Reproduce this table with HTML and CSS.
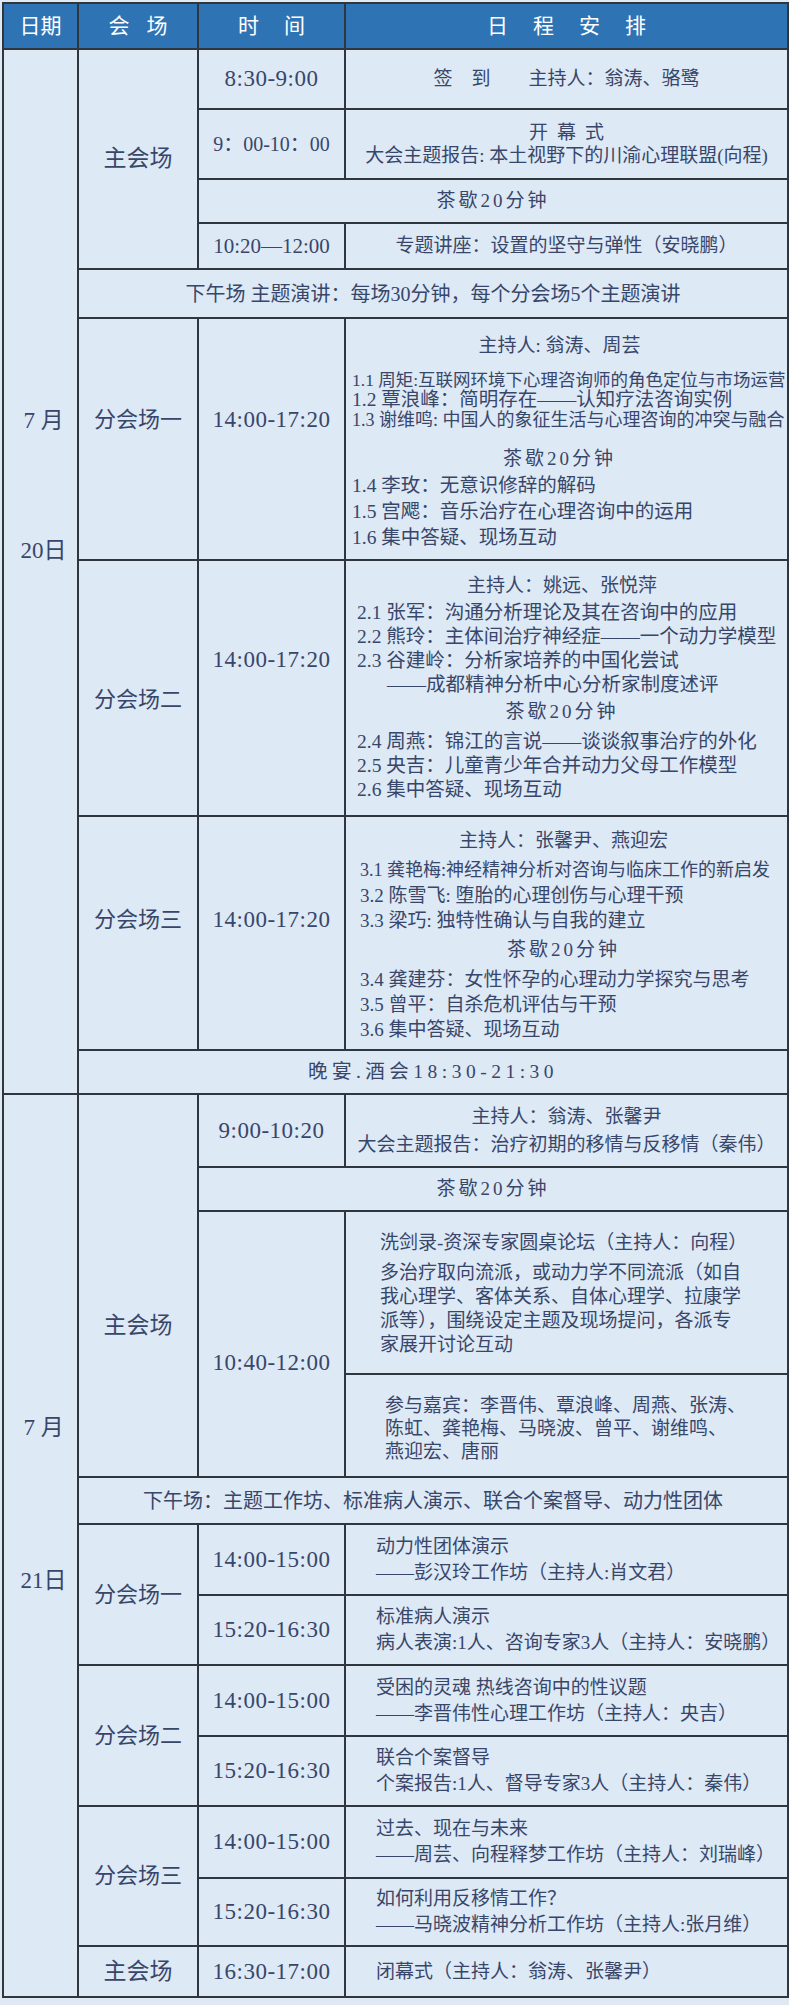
FILE: index.html
```html
<!DOCTYPE html>
<html lang="zh-CN">
<head>
<meta charset="utf-8">
<title>日程安排</title>
<link rel="stylesheet" href="styles.css">
</head>
<body>
<div class="page">
<table class="sched">
<colgroup>
<col class="c-date"><col class="c-venue"><col class="c-time"><col class="c-prog">
</colgroup>
<thead>
<tr class="h46">
<th>日期</th>
<th><span class="ls17">会场</span></th>
<th><span class="ls25">时间</span></th>
<th><span class="ls25">日程安排</span></th>
</tr>
</thead>
<tbody>
<!-- 7月20日 -->
<tr class="h60">
<td class="date day1" rowspan="9"><span class="dl gap1">7 月</span><span class="dl">20日</span></td>
<td class="venue big" rowspan="4">主会场</td>
<td class="time">8:30-9:00</td>
<td class="prog c">签　到　　主持人：翁涛、骆鹭</td>
</tr>
<tr class="h70">
<td class="time t-open">9：00-10：00</td>
<td class="prog c lh23"><span class="ls9">开幕式</span><br>大会主题报告: 本土视野下的川渝心理联盟(向程)</td>
</tr>
<tr class="h44"><td class="prog c tea" colspan="2">茶歇20分钟</td></tr>
<tr class="h46">
<td class="time t-dash">10:20—12:00</td>
<td class="prog c">专题讲座：设置的坚守与弹性（安晓鹏）</td>
</tr>
<tr class="h49"><td class="prog c band" colspan="3">下午场 主题演讲：每场30分钟，每个分会场5个主题演讲</td></tr>

<tr class="h242">
<td class="venue up38">分会场一</td>
<td class="time up38">14:00-17:20</td>
<td class="prog list l1">
<div class="host">主持人: 翁涛、周芸</div>
<div class="group tight">
<div class="it s175">1.1 周矩:互联网环境下心理咨询师的角色定位与市场运营</div>
<div class="it">1.2 覃浪峰：简明存在——认知疗法咨询实例</div>
<div class="it s18">1.3 谢维鸣: 中国人的象征生活与心理咨询的冲突与融合</div>
</div>
<div class="tea-ln">茶歇20分钟</div>
<div class="group lh26">
<div class="it">1.4 李玫：无意识修辞的解码</div>
<div class="it">1.5 宫飔：音乐治疗在心理咨询中的运用</div>
<div class="it">1.6 集中答疑、现场互动</div>
</div>
</td>
</tr>

<tr class="h256">
<td class="venue down24">分会场二</td>
<td class="time up28">14:00-17:20</td>
<td class="prog list l2">
<div class="host">主持人：姚远、张悦萍</div>
<div class="group lh24">
<div class="it">2.1 张军：沟通分析理论及其在咨询中的应用</div>
<div class="it">2.2 熊玲：主体间治疗神经症——一个动力学模型</div>
<div class="it">2.3 谷建岭：分析家培养的中国化尝试</div>
<div class="it sub">——成都精神分析中心分析家制度述评</div>
</div>
<div class="tea-ln">茶歇20分钟</div>
<div class="group lh24">
<div class="it">2.4 周燕：锦江的言说——谈谈叙事治疗的外化</div>
<div class="it">2.5 央吉：儿童青少年合并动力父母工作模型</div>
<div class="it">2.6 集中答疑、现场互动</div>
</div>
</td>
</tr>

<tr class="h234">
<td class="venue up26">分会场三</td>
<td class="time up26">14:00-17:20</td>
<td class="prog list l3">
<div class="host">主持人：张馨尹、燕迎宏</div>
<div class="group lh25">
<div class="it s18">3.1 龚艳梅:神经精神分析对咨询与临床工作的新启发</div>
<div class="it">3.2 陈雪飞: 堕胎的心理创伤与心理干预</div>
<div class="it">3.3 梁巧: 独特性确认与自我的建立</div>
</div>
<div class="tea-ln">茶歇20分钟</div>
<div class="group lh25">
<div class="it">3.4 龚建芬：女性怀孕的心理动力学探究与思考</div>
<div class="it">3.5 曾平：自杀危机评估与干预</div>
<div class="it">3.6 集中答疑、现场互动</div>
</div>
</td>
</tr>

<tr class="h44"><td class="prog c party" colspan="3">晚宴.酒会18:30-21:30</td></tr>

<!-- 7月21日 -->
<tr class="h73">
<td class="date day2" rowspan="12"><span class="dl gap2">7 月</span><span class="dl">21日</span></td>
<td class="venue big down80" rowspan="4">主会场</td>
<td class="time">9:00-10:20</td>
<td class="prog c lh28">主持人：翁涛、张馨尹<br>大会主题报告：治疗初期的移情与反移情（秦伟）</td>
</tr>
<tr class="h44"><td class="prog c tea" colspan="2">茶歇20分钟</td></tr>
<tr class="h163">
<td class="time down38" rowspan="2">10:40-12:00</td>
<td class="prog forum">
<div class="forum-title">洗剑录-资深专家圆桌论坛（主持人：向程）</div>
<p class="forum-text">多治疗取向流派，或动力学不同流派（如自<br>我心理学、客体关系、自体心理学、拉康学<br>派等），围绕设定主题及现场提问，各派专<br>家展开讨论互动</p>
</td>
</tr>
<tr class="h103">
<td class="prog guests">参与嘉宾：李晋伟、覃浪峰、周燕、张涛、<br>陈虹、龚艳梅、马晓波、曾平、谢维鸣、<br>燕迎宏、唐丽</td>
</tr>
<tr class="h47"><td class="prog c band" colspan="3">下午场：主题工作坊、标准病人演示、联合个案督导、动力性团体</td></tr>

<tr class="h71">
<td class="venue" rowspan="2">分会场一</td>
<td class="time">14:00-15:00</td>
<td class="prog ws">动力性团体演示<br>——彭汉玲工作坊（主持人:肖文君）</td>
</tr>
<tr class="h70">
<td class="time">15:20-16:30</td>
<td class="prog ws">标准病人演示<br>病人表演:1人、咨询专家3人（主持人：安晓鹏）</td>
</tr>
<tr class="h71">
<td class="venue" rowspan="2">分会场二</td>
<td class="time">14:00-15:00</td>
<td class="prog ws">受困的灵魂 热线咨询中的性议题<br>——李晋伟性心理工作坊（主持人：央吉）</td>
</tr>
<tr class="h70">
<td class="time">15:20-16:30</td>
<td class="prog ws">联合个案督导<br>个案报告:1人、督导专家3人（主持人：秦伟）</td>
</tr>
<tr class="h72">
<td class="venue" rowspan="2">分会场三</td>
<td class="time">14:00-15:00</td>
<td class="prog ws">过去、现在与未来<br>——周芸、向程释梦工作坊（主持人：刘瑞峰）</td>
</tr>
<tr class="h68">
<td class="time">15:20-16:30</td>
<td class="prog ws">如何利用反移情工作？<br>——马晓波精神分析工作坊（主持人:张月维）</td>
</tr>
<tr class="h51">
<td class="venue big">主会场</td>
<td class="time">16:30-17:00</td>
<td class="prog ws">闭幕式（主持人：翁涛、张馨尹）</td>
</tr>
</tbody>
</table>
</div>
</body>
</html>
```

FILE: styles.css
```css
* { box-sizing: border-box; }

html, body {
  margin: 0;
  padding: 0;
}

body {
  width: 789px;
  height: 2005px;
  overflow: hidden;
  background: #dfe9f4;
  color: #38466a;
  font-family: "Liberation Serif", "Noto Sans CJK SC", serif;
}

.page {
  padding: 2px 2px 0 2px;
}

.sched {
  border-collapse: collapse;
  table-layout: fixed;
  width: 785px;
  background: #dde9f5;
}

.c-date { width: 75px; }
.c-venue { width: 120px; }
.c-time { width: 147px; }
.c-prog { width: 443px; }

.sched th,
.sched td {
  border: 2px solid #30363d;
  padding: 0;
  text-align: center;
  vertical-align: middle;
}

/* row heights */
.h44 { height: 44px; }
.h46 { height: 46px; }
.h47 { height: 47px; }
.h49 { height: 49px; }
.h51 { height: 51px; }
.h60 { height: 60px; }
.h68 { height: 68px; }
.h70 { height: 70px; }
.h71 { height: 71px; }
.h72 { height: 72px; }
.h73 { height: 73px; }
.h103 { height: 103px; }
.h163 { height: 163px; }
.h234 { height: 234px; }
.h242 { height: 242px; }
.h256 { height: 256px; }

/* header */
.sched th {
  background: #2e74b5;
  color: #ffffff;
  font-weight: normal;
  font-size: 21px;
  line-height: 26px;
}

.ls17 { letter-spacing: 17px; margin-right: -17px; }
.ls25 { letter-spacing: 25px; margin-right: -25px; }
.ls9 { letter-spacing: 9px; margin-right: -9px; }

/* date column */
.date {
  vertical-align: top !important;
  font-size: 23px;
  padding-left: 6px !important;
}
.day1 { padding-top: 356px !important; }
.day2 { padding-top: 318px !important; }
.dl {
  display: block;
  line-height: 30px;
}
.gap1 { margin-bottom: 100px; }
.gap2 { margin-bottom: 123px; }

/* venue column */
.venue {
  font-size: 22px;
  line-height: 30px;
}
.venue.big { font-size: 23px; }

/* time column */
.time {
  font-size: 23px;
  letter-spacing: 0.5px;
  line-height: 30px;
}
.t-open { font-size: 20px; letter-spacing: 0; }
.t-dash { font-size: 21px; letter-spacing: 0; }

/* vertical nudges */
.up38 { padding-bottom: 38px !important; }
.up28 { padding-bottom: 56px !important; }
.up26 { padding-bottom: 26px !important; }
.down24 { padding-top: 24px !important; }
.down38 { padding-top: 38px !important; }
.down80 { padding-top: 80px !important; }

/* programme column */
.prog {
  font-size: 19px;
  line-height: 26px;
}
.prog.c { text-align: center; }
.lh23 { line-height: 23px; }
.lh28 { line-height: 28px; }

.tea { letter-spacing: 3px; }
.band { font-size: 20px; }
.party { letter-spacing: 4.5px; font-size: 19.5px; }

/* sub-venue lists */
.list {
  vertical-align: top !important;
  text-align: left !important;
  padding-right: 20px !important;
}
.l1 { padding-top: 12px !important; padding-left: 6px !important; }
.l2 { padding-top: 10px !important; padding-left: 11px !important; }
.l3 { padding-top: 9px !important; padding-left: 14px !important; }

.host {
  text-align: center;
  line-height: 30px;
}
.group .it {
  white-space: nowrap;
  font-size: 19.5px;
}
.l3 .group .it { font-size: 19px; }
.tight { margin-top: 9px; line-height: 20px; }
.lh24 { line-height: 24px; }
.lh25 { line-height: 25px; }
.lh26 { line-height: 26px; }
.l2 .group:first-of-type { margin-top: 6px; }
.l3 .group { margin-top: 2px; }

.group .it.s175 { font-size: 17.5px; }
.group .it.s18 { font-size: 18px; }
.it.sub { padding-left: 30px; }

.tea-ln {
  text-align: center;
  letter-spacing: 3px;
  line-height: 29px;
  margin-top: 14px;
}
.l2 .tea-ln { margin-top: 1px; line-height: 28px; margin-bottom: 4px; }
.l3 .tea-ln { margin-top: 2px; line-height: 30px; margin-bottom: 1px; }

/* day two */
.forum {
  text-align: left !important;
  padding-left: 34px !important;
}
.forum-title {
  line-height: 30px;
  white-space: nowrap;
}
.forum-text {
  margin: 3px 0 0 0;
  line-height: 24px;
}
.guests {
  text-align: left !important;
  padding: 6px 0 0 39px !important;
  line-height: 23px;
}
.ws {
  text-align: left !important;
  padding-left: 30px !important;
  line-height: 26px;
  white-space: nowrap;
}
```
